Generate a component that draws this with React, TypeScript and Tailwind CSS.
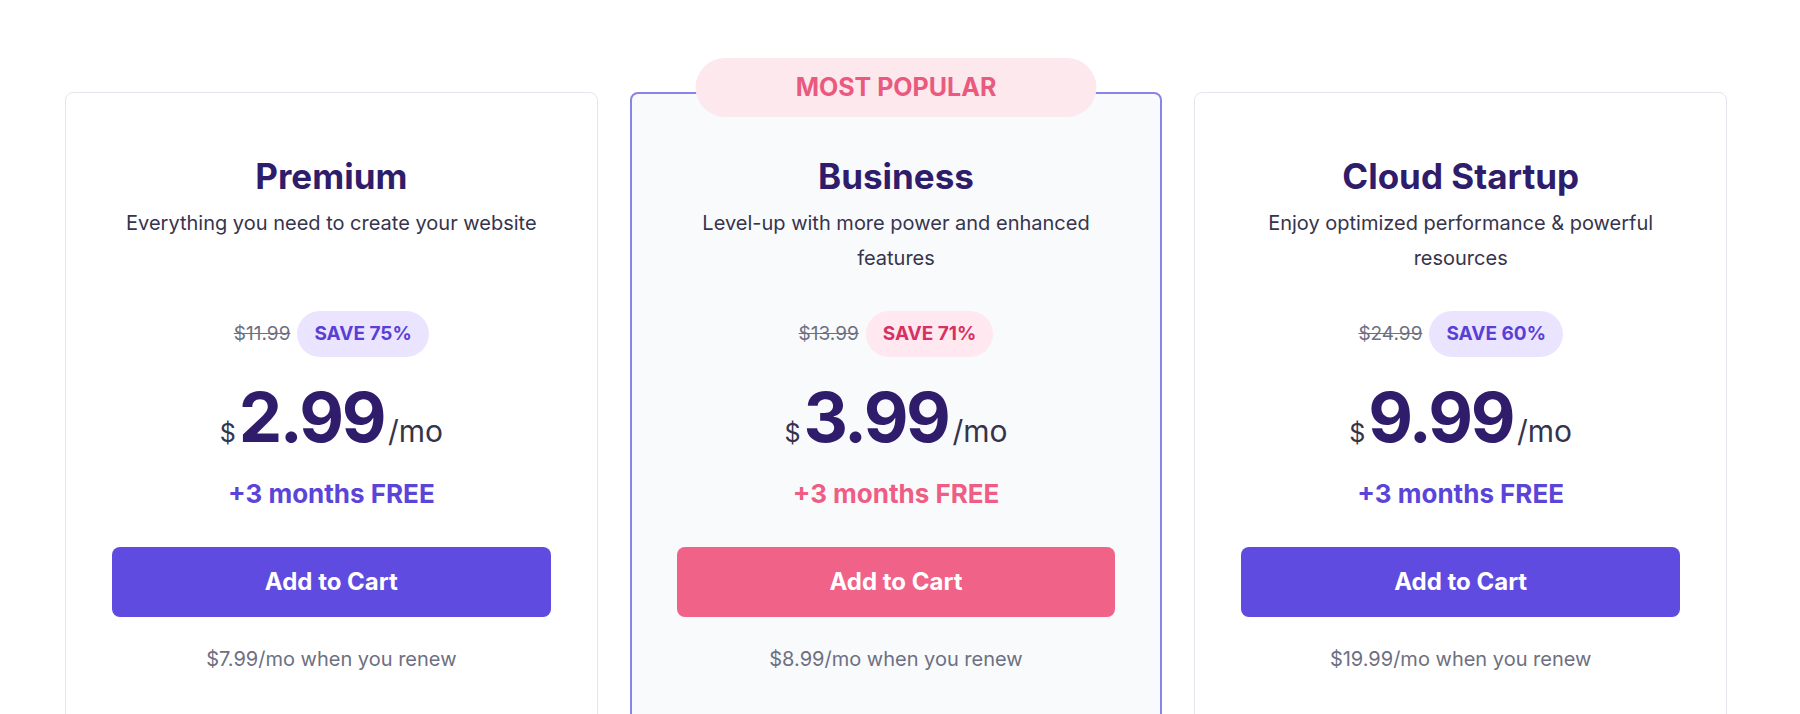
import React from "react";

type Plan = {
  name: string;
  desc: string;
  oldPrice: string;
  save: string;
  price: string;
  renew: string;
  popular?: boolean;
};

const plans: Plan[] = [
  {
    name: "Premium",
    desc: "Everything you need to create your website",
    oldPrice: "$11.99",
    save: "SAVE 75%",
    price: "2.99",
    renew: "$7.99/mo when you renew",
  },
  {
    name: "Business",
    desc: "Level-up with more power and enhanced features",
    oldPrice: "$13.99",
    save: "SAVE 71%",
    price: "3.99",
    renew: "$8.99/mo when you renew",
    popular: true,
  },
  {
    name: "Cloud Startup",
    desc: "Enjoy optimized performance & powerful resources",
    oldPrice: "$24.99",
    save: "SAVE 60%",
    price: "9.99",
    renew: "$19.99/mo when you renew",
  },
];

function PlanCard({ plan }: { plan: Plan }) {
  const hot = plan.popular;
  return (
    <div
      className={
        hot
          ? "relative flex flex-col items-center rounded-lg border-2 border-[#8b84e8] bg-[#f9fafc] px-[45px] pt-[60px] pb-[80px]"
          : "relative flex flex-col items-center rounded-lg border border-[#e4e6ee] bg-white px-[46px] pt-[61px] pb-[81px]"
      }
    >
      {hot && (
        <div className="absolute -top-[36px] left-1/2 flex h-[59px] w-[401px] -translate-x-1/2 items-center justify-center rounded-full bg-[#fde8ee] text-[25px] font-bold text-[#ea5a7e]">
          MOST POPULAR
        </div>
      )}

      {/* Title + description */}
      <h2 className="text-[35px] leading-[44px] font-bold text-[#2f1c6a]">{plan.name}</h2>
      <p className="mt-[8px] h-[70px] max-w-[440px] text-center text-[20px] leading-[35px] text-[#36344d]">
        {plan.desc}
      </p>

      {/* Discount */}
      <div className="mt-[35px] flex h-[46px] items-center gap-[7px]">
        <span className="text-[19px] text-[#6d7081] line-through">{plan.oldPrice}</span>
        <span
          className={
            hot
              ? "flex h-[46px] items-center rounded-full bg-[#ffe8ef] px-[17px] text-[19px] font-bold text-[#d63163]"
              : "flex h-[46px] items-center rounded-full bg-[#ebe4ff] px-[17px] text-[19px] font-bold text-[#5a3fd6]"
          }
        >
          {plan.save}
        </span>
      </div>

      {/* Price */}
      <div className="mt-[24px] flex h-[72px] items-baseline leading-none text-[#2f1c6a]">
        <span className="mr-[3px] text-[25px] text-[#36344d]">$</span>
        <span className="text-[69px] leading-[72px] font-bold tracking-[-2.5px]">{plan.price}</span>
        <span className="ml-[4px] text-[30px] text-[#36344d]">/mo</span>
      </div>

      <p
        className={
          hot
            ? "mt-[25px] text-[26px] leading-[32px] font-bold text-[#ef5d85]"
            : "mt-[25px] text-[26px] leading-[32px] font-bold text-[#5b45d8]"
        }
      >
        +3 months FREE
      </p>

      <button
        className={
          hot
            ? "mt-[37px] h-[70px] w-full rounded-lg bg-[#f06287] text-[24px] font-bold text-white"
            : "mt-[37px] h-[70px] w-full rounded-lg bg-[#5f4bdf] text-[24px] font-bold text-white"
        }
      >
        Add to Cart
      </button>

      <p className="mt-[28px] text-[20px] leading-[28px] text-[#6d7081]">{plan.renew}</p>
    </div>
  );
}

export default function App() {
  return (
    <div className="h-[714px] overflow-hidden bg-white font-['Inter','Liberation_Sans',sans-serif]">
      <div className="grid grid-cols-3 gap-[32px] pt-[92px] pl-[65px] pr-[73px]">
        {plans.map((p) => (
          <PlanCard key={p.name} plan={p} />
        ))}
      </div>
    </div>
  );
}
